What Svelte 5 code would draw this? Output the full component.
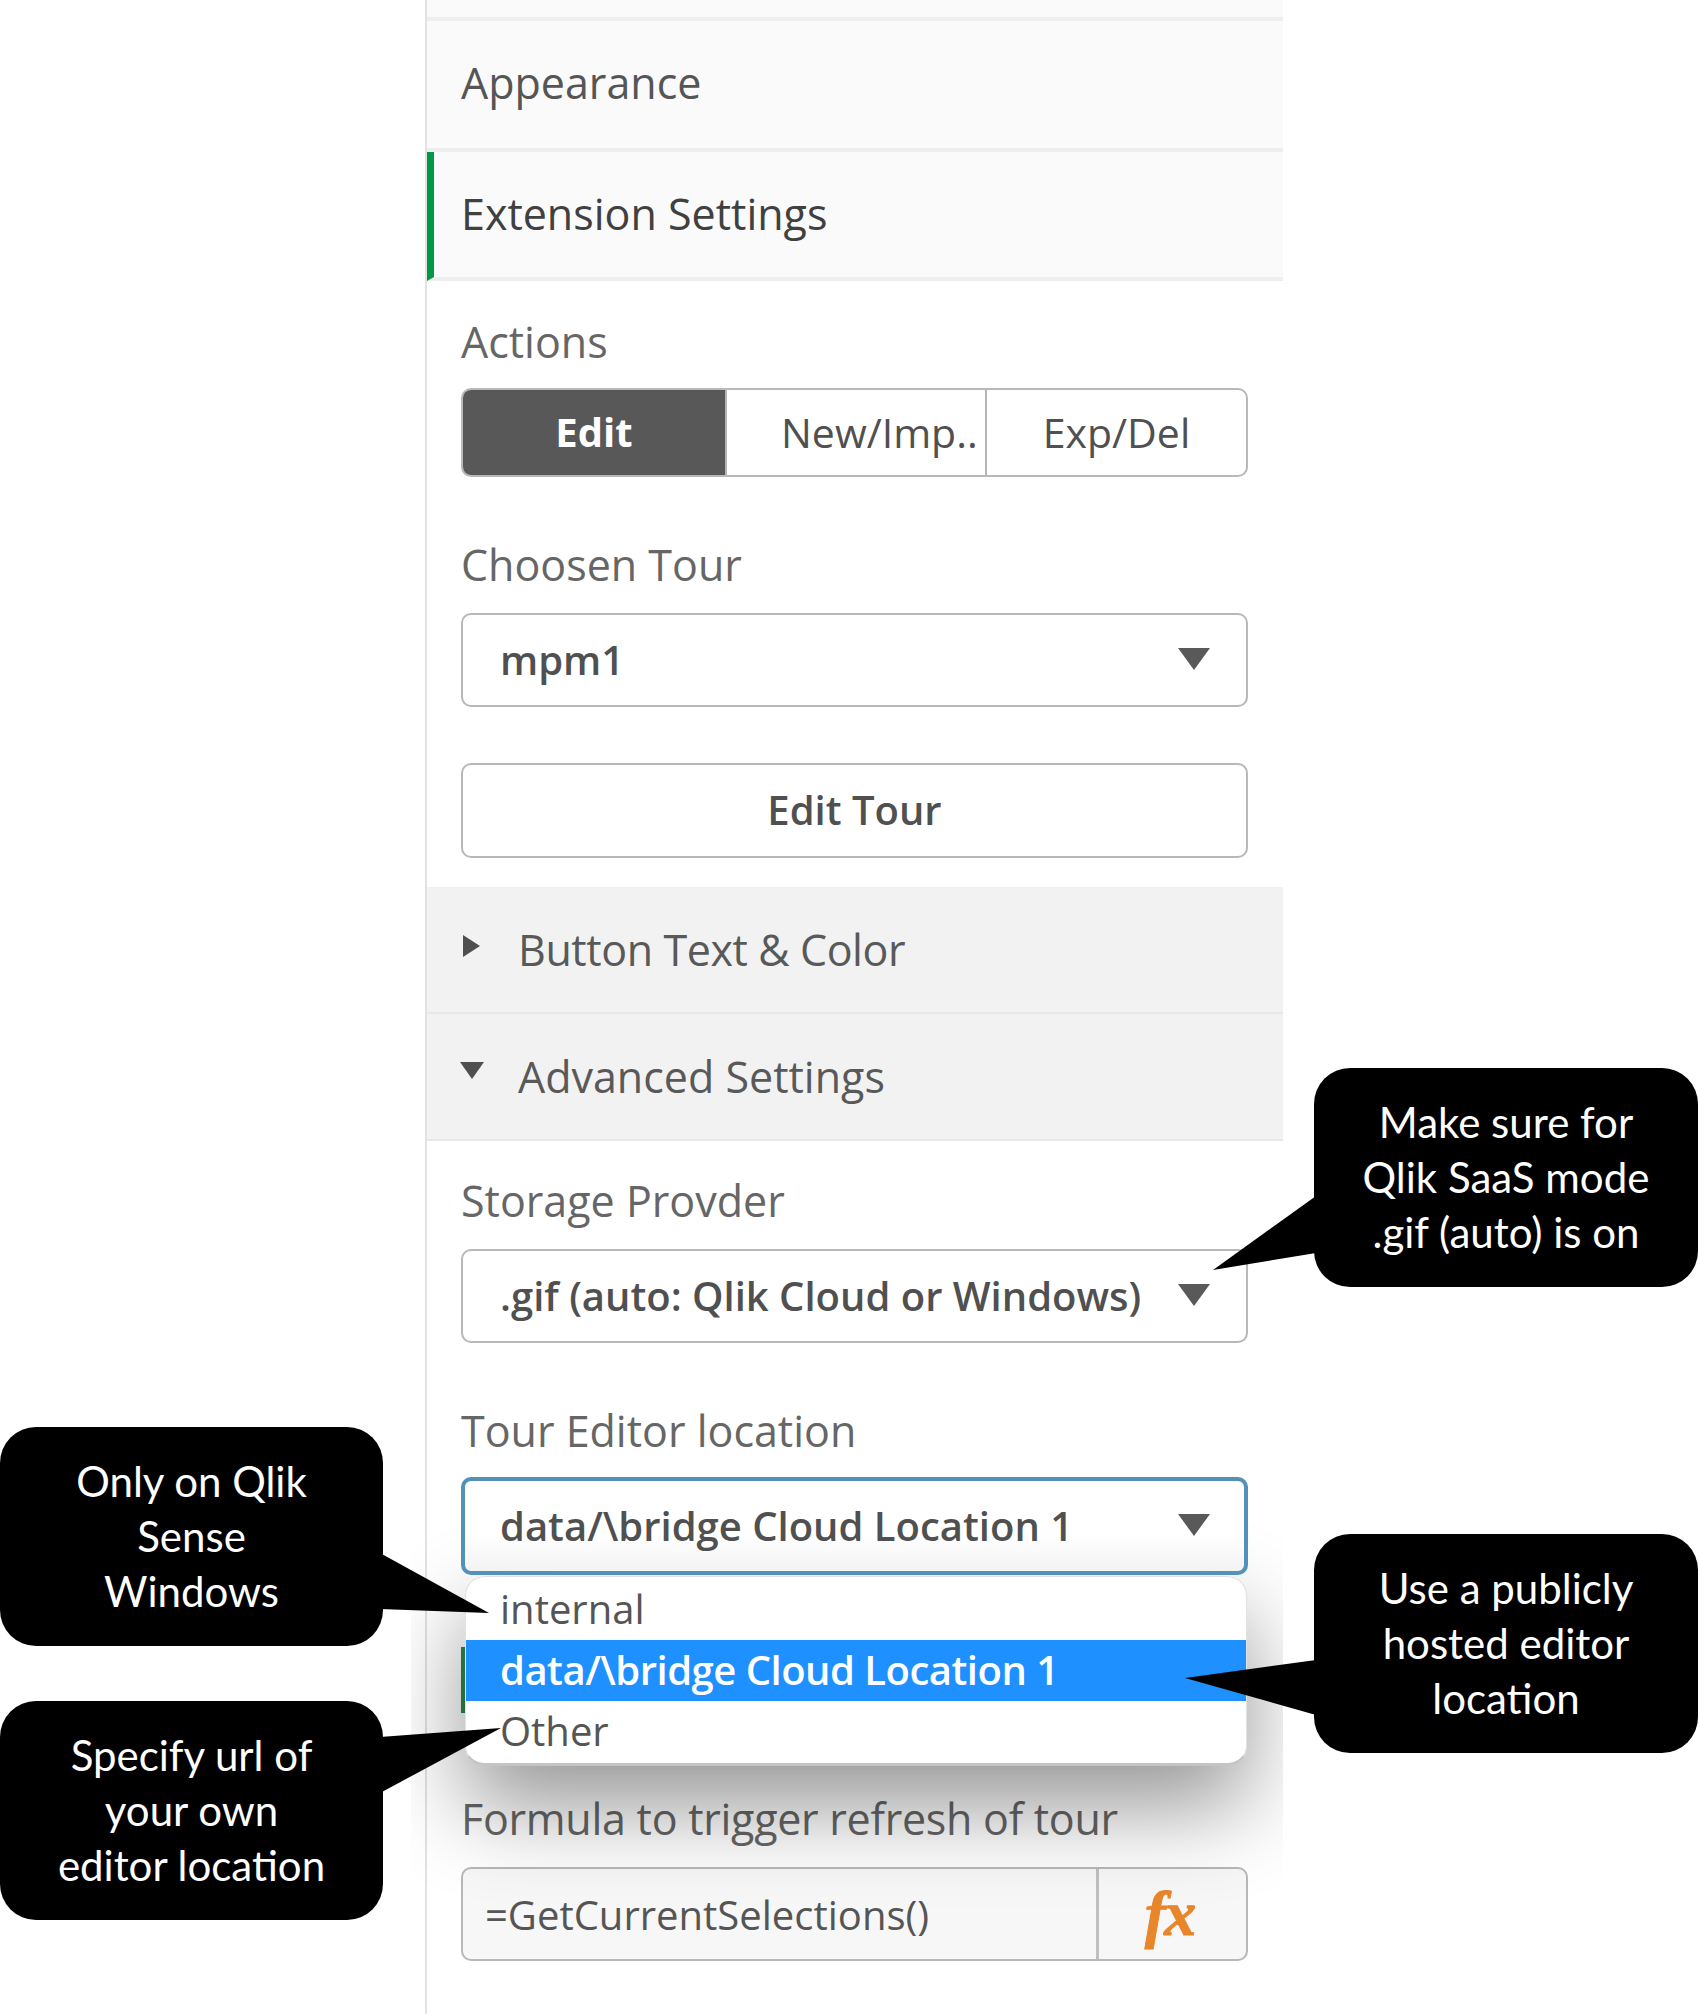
<script>
  const callouts = [
    { cls: 'left one', lines: ['Only on Qlik', 'Sense', 'Windows'] },
    { cls: 'left two', lines: ['Specify url of', 'your own', 'editor location'] },
    { cls: 'right three', lines: ['Make sure for', 'Qlik SaaS mode', '.gif (auto) is on'] },
    { cls: 'right four', lines: ['Use a publicly', 'hosted editor', 'location'] }
  ];

  // callout tails, in page coordinates
  const tails = [
    '380,1553 489,1613 380,1609',
    '380,1737 501,1728 380,1793',
    '1316,1196 1213,1270 1316,1253',
    '1316,1660 1185,1678 1316,1715'
  ];
</script>

<div class="page">
  <div class="panel">
    <div class="stub"></div>
    <div class="row">Appearance</div>
    <div class="row active">Extension Settings</div>

    <div class="section first">
      <div class="label actions">Actions</div>
      <div class="segmented">
        <div class="seg on">Edit</div>
        <div class="seg cut">New/Imp..</div>
        <div class="seg">Exp/Del</div>
      </div>

      <div class="label spaced">Choosen Tour</div>
      <div class="select">
        <span>mpm1</span>
        <i class="arrow"></i>
      </div>

      <button class="edit-btn">Edit Tour</button>
    </div>

    <div class="group">
      <i class="caret-right"></i>
      <span class="tight">Button Text &amp; Color</span>
    </div>
    <div class="group">
      <i class="caret-down"></i>
      <span>Advanced Settings</span>
    </div>

    <div class="section">
      <div class="label storage">Storage Provder</div>
      <div class="select">
        <span>.gif (auto: Qlik Cloud or Windows)</span>
        <i class="arrow"></i>
      </div>

      <div class="label spaced">Tour Editor location</div>
      <div class="select-wrap">
        <div class="select focused">
          <span>data/\bridge Cloud Location 1</span>
          <i class="arrow"></i>
        </div>
        <div class="green-edge"></div>
        <div class="menu">
          <div class="item">internal</div>
          <div class="item selected">data/\bridge Cloud Location 1</div>
          <div class="item">Other</div>
        </div>
      </div>

      <div class="label formula">Formula to trigger refresh of tour</div>
      <div class="expr">
        <span class="expr-text">=GetCurrentSelections()</span>
        <span class="fx">fx</span>
      </div>
    </div>
  </div>

  <svg class="tails" width="1698" height="2014" viewBox="0 0 1698 2014">
    {#each tails as points}
      <polygon {points} fill="#000" />
    {/each}
  </svg>

  {#each callouts as c}
    <div class="callout {c.cls}">
      {#each c.lines as line}
        <div>{line}</div>
      {/each}
    </div>
  {/each}
</div>

<style>
  :global(body) {
    margin: 0;
    background: #fff;
  }

  .page {
    position: relative;
    width: 1698px;
    height: 2014px;
    overflow: hidden;
    font-family: "Open Sans", Lato, sans-serif;
  }

  .panel {
    box-sizing: border-box;
    width: 858px;
    height: 2014px;
    margin-left: 425px;
    border-left: 2px solid #e2e2e2;
    clip-path: inset(0 0 0 -14px);
    color: #595959;
    font-size: 43px;
  }

  .stub {
    height: 17px;
    background: #fafafa;
    border-bottom: 4px solid #eeeeee;
  }

  .row {
    box-sizing: border-box;
    display: flex;
    align-items: center;
    height: 131px;
    padding-left: 34px;
    padding-bottom: 4px;
    background: #fafafa;
    border-bottom: 4px solid #eeeeee;
    color: #555;
  }

  .row.active {
    height: 129px;
    border-left: 7px solid #009845;
    padding-left: 27px;
    padding-bottom: 2px;
    color: #404040;
  }

  .section {
    padding: 0 35px 0 34px;
  }

  .section.first {
    padding-bottom: 29px;
  }

  .label {
    height: 50px;
    line-height: 50px;
    color: #666;
  }

  .label.actions { margin-top: 36px; }
  .label.spaced { margin-top: 63px; }
  .label.storage { margin-top: 35px; }
  .label.formula {
    margin-top: 219px;
    margin-bottom: -1px;
    letter-spacing: -0.27px;
  }

  .segmented {
    box-sizing: border-box;
    display: flex;
    height: 89px;
    margin-top: 21px;
    border: 2px solid #b8b8b8;
    border-radius: 10px;
    overflow: hidden;
    background: #fff;
    font-size: 41px;
    color: #505050;
  }

  .seg {
    display: flex;
    align-items: center;
    justify-content: center;
    flex: 1;
    padding-bottom: 2px;
    white-space: nowrap;
    overflow: hidden;
    border-left: 2px solid #b5b5b5;
  }

  .seg.on {
    flex: 0 0 262px;
    border-left: 0;
    background: #585858;
    color: #fff;
    font-weight: 700;
    font-size: 40px;
  }

  .seg.cut {
    flex: 0 0 260px;
    box-sizing: border-box;
    justify-content: flex-start;
    padding-left: 54px;
  }

  .select {
    box-sizing: border-box;
    display: flex;
    align-items: center;
    justify-content: space-between;
    height: 94px;
    margin-top: 23px;
    padding: 0 36px 2px 37px;
    border: 2px solid #b8b8b8;
    border-radius: 10px;
    background: #fff;
    color: #505050;
    font-weight: 600;
    font-size: 40px;
  }

  .select.focused {
    position: relative;
    z-index: 3;
    height: 98px;
    margin-top: 21px;
    padding: 0 34px 2px 35px;
    border: 4px solid #5392b8;
    background: linear-gradient(#fff 60%, #f3f3f3);
  }

  .select-wrap {
    position: relative;
  }

  .arrow {
    width: 0;
    height: 0;
    border-left: 16px solid transparent;
    border-right: 16px solid transparent;
    border-top: 22px solid #595959;
  }

  .edit-btn {
    display: block;
    box-sizing: border-box;
    width: 100%;
    height: 95px;
    margin-top: 56px;
    padding-bottom: 4px;
    border: 2px solid #b8b8b8;
    border-radius: 10px;
    background: #fff;
    color: #505050;
    font: 600 40px "Open Sans", Lato, sans-serif;
  }

  .group {
    box-sizing: border-box;
    position: relative;
    display: flex;
    align-items: center;
    height: 127px;
    padding-left: 91px;
    background: #f2f2f2;
    border-bottom: 2px solid #e8e8e8;
    color: #595959;
  }

  .tight {
    letter-spacing: -0.4px;
  }

  .caret-right {
    position: absolute;
    left: 36px;
    top: 48px;
    border-top: 11px solid transparent;
    border-bottom: 11px solid transparent;
    border-left: 17px solid #4f4f4f;
  }

  .caret-down {
    position: absolute;
    left: 33px;
    top: 48px;
    border-left: 12px solid transparent;
    border-right: 12px solid transparent;
    border-top: 17px solid #4f4f4f;
  }

  .green-edge {
    position: absolute;
    left: 0;
    top: 170px;
    width: 4px;
    height: 66px;
    background: #2f8a4a;
    z-index: 1;
  }

  .menu {
    position: absolute;
    z-index: 2;
    left: 4px;
    right: 1px;
    top: 99px;
    height: 190px;
    box-sizing: border-box;
    padding-top: 2px;
    border: 1px solid #e2e2e2;
    border-bottom: 3px solid #c4c4c4;
    border-radius: 20px;
    background: #fff;
    box-shadow: 0 40px 90px rgba(0, 0, 0, 0.42);
    font-size: 40px;
    color: #555;
  }

  .item {
    box-sizing: border-box;
    display: flex;
    align-items: center;
    height: 61px;
    padding: 0 0 3px 34px;
  }

  .item.selected {
    background: #1e90ff;
    color: #fff;
    font-weight: 600;
    letter-spacing: -0.5px;
  }

  .expr {
    box-sizing: border-box;
    display: flex;
    align-items: stretch;
    height: 94px;
    margin-top: 24px;
    border: 2px solid #b8b8b8;
    border-radius: 10px;
    background: #f7f7f7;
    color: #555;
    font-size: 40px;
    position: relative;
  }

  .expr-text {
    box-sizing: border-box;
    display: flex;
    align-items: center;
    width: 636px;
    padding-left: 22px;
    border-right: 3px solid #c0c0c0;
  }

  .fx {
    display: flex;
    align-items: center;
    justify-content: center;
    flex: 1;
    padding-right: 6px;
    font: italic 700 64px "Liberation Serif", serif;
    letter-spacing: -2px;
    -webkit-text-stroke: 1px #e8862a;
    color: #e8862a;
  }

  .tails {
    position: absolute;
    left: 0;
    top: 0;
    z-index: 5;
    pointer-events: none;
  }

  .callout {
    box-sizing: border-box;
    position: absolute;
    z-index: 6;
    display: flex;
    flex-direction: column;
    align-items: center;
    justify-content: center;
    background: #000;
    color: #fff;
    border-radius: 36px;
    font-family: Lato, "Open Sans", sans-serif;
    font-size: 42px;
    line-height: 55px;
  }

  .callout.left { left: 0; width: 383px; height: 219px; }
  .callout.right { left: 1314px; width: 384px; height: 219px; }
  .callout.one { top: 1427px; }
  .callout.two { top: 1701px; }
  .callout.three { top: 1068px; }
  .callout.four { top: 1534px; }
</style>
